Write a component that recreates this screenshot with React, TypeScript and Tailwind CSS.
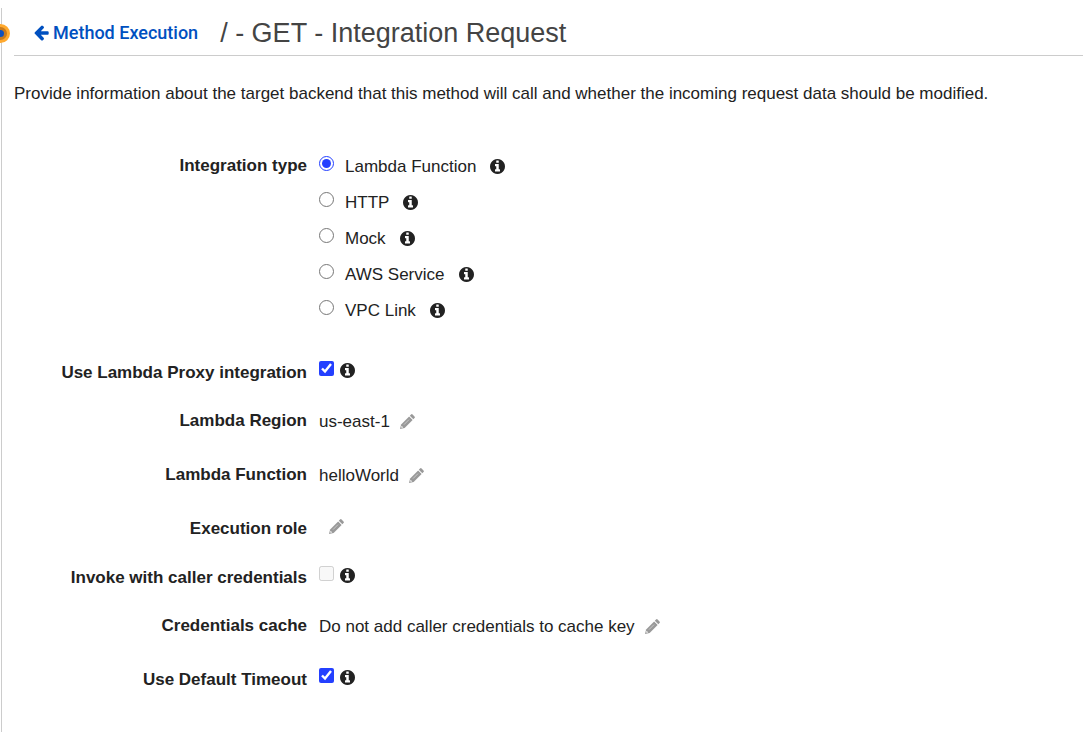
import { useState, type ReactNode } from 'react';

const INTEGRATION_TYPES = ['Lambda Function', 'HTTP', 'Mock', 'AWS Service', 'VPC Link'];

function InfoButton({ about }: { about: string }) {
  return (
    <button type="button" aria-label={`About ${about}`} className="cursor-pointer pb-px">
      <svg viewBox="128 128 1536 1536" className="size-[15px] fill-[#222]" aria-hidden="true">
        <path d="M1152 1376v-160q0-14-9-23t-23-9h-96v-512q0-14-9-23t-23-9h-320q-14 0-23 9t-9 23v160q0 14 9 23t23 9h96v320h-96q-14 0-23 9t-9 23v160q0 14 9 23t23 9h448q14 0 23-9t9-23zm-128-896v-160q0-14-9-23t-23-9h-192q-14 0-23 9t-9 23v160q0 14 9 23t23 9h192q14 0 23-9t9-23zm640 416q0 209-103 385.5t-279.5 279.5-385.5 103-385.5-103-279.5-279.5-103-385.5 103-385.5 279.5-279.5 385.5-103 385.5 103 279.5 279.5 103 385.5z" />
      </svg>
    </button>
  );
}

function EditButton({ field }: { field: string }) {
  return (
    <button type="button" aria-label={`Edit ${field}`} className="ml-[10px] cursor-pointer pb-px">
      <svg viewBox="0 0 15 15" className="size-[15px] fill-[#999]" aria-hidden="true">
        <path d="M9.800 1.700 11 .5q.8-.8 1.600 0l1.900 1.900q.8.8 0 1.600l-1.200 1.200z" />
        <path d="M9.100 2.400l3.500 3.500-8 8L0 15l1.100-4.600z" />
        <path d="M1.600 11.800l1.600 1.600-1.500.4-.5-.5z" className="fill-white" />
        <path d="M4 10.600l5-5" className="stroke-[#ddd] stroke-[0.7]" />
      </svg>
    </button>
  );
}

function RowLabel({ label, htmlFor }: { label: string; htmlFor?: string }) {
  return (
    <div className="w-[293px] shrink-0 text-right font-bold">
      {htmlFor ? <label htmlFor={htmlFor}>{label}</label> : label}
    </div>
  );
}

function ValueRow({ label, children }: { label: string; children: ReactNode }) {
  return (
    <div className="mb-[29px] flex gap-3">
      <RowLabel label={label} />
      <div className="mt-px flex items-center">
        {children}
        <EditButton field={label} />
      </div>
    </div>
  );
}

function CheckRow({ id, label, checked = false, disabled = false }: { id: string; label: string; checked?: boolean; disabled?: boolean }) {
  return (
    <div className="mb-6 flex gap-3">
      <RowLabel label={label} htmlFor={id} />
      <div className="flex items-center gap-[6px] pb-[5px]">
        <input id={id} type="checkbox" defaultChecked={checked} disabled={disabled} className="mb-1 size-[15px] accent-[#2440ff]" />
        <InfoButton about={label} />
      </div>
    </div>
  );
}

export default function App() {
  const [type, setType] = useState('Lambda Function');

  return (
    <div className="min-h-screen overflow-hidden bg-white pt-2 font-['Liberation_Sans',Arial,sans-serif] text-[17px] leading-6 text-[#222]">
      <div className="relative ml-px min-h-screen border-l border-[#ccc] pl-3">
        {/* Resize handle on the divider */}
        <span className="absolute top-4 -left-[11px] size-[19px] rounded-full border-3 border-[#ffa92e] bg-[#c87a1d] p-[3px]">
          <span className="block size-full rounded-full bg-[#0d50c0]" />
        </span>

        <header className="flex h-12 items-center border-b border-[#ccc] pt-[2px] pl-[19px]">
          <a href="#method-execution" className="flex items-center gap-1 font-['Roboto',sans-serif] text-lg font-medium text-[#0050c0]">
            <svg viewBox="64 128 1600 1664" className="size-4 fill-current" aria-hidden="true">
              <path d="M1664 896v128q0 53-32.5 90.5t-84.5 37.500h-704l293 294q38 36 38 90t-38 90l-75 76q-37 37-90 37-52 0-91-37l-651-652q-37-37-37-90 0-52 37-91l651-650q38-38 91-38 52 0 90 38l75 74q38 38 38 91t-38 91l-293 293h704q52 0 84.5 37.500t32.500 90.500z" />
            </svg>
            Method Execution
          </a>
          <h1 className="ml-[22px] text-[27px] leading-8 text-[#444]">/ - GET - Integration Request</h1>
        </header>

        <p className="mt-[26px]">
          Provide information about the target backend that this method will call and whether the incoming request data should be modified.
        </p>

        <form className="mt-12">
          <fieldset className="flex gap-3" aria-label="Integration type">
            <RowLabel label="Integration type" />
            <div className="mt-px flex flex-col gap-3">
              {INTEGRATION_TYPES.map((name) => (
                <div key={name} className="flex items-center gap-[14px]">
                  <label className="flex items-center gap-[11px]">
                    <input
                      type="radio"
                      name="integrationType"
                      checked={type === name}
                      onChange={() => setType(name)}
                      className="mb-[7px] size-[15px] accent-[#2440ff]"
                    />
                    {name}
                  </label>
                  <InfoButton about={name} />
                </div>
              ))}
            </div>
          </fieldset>

          <div className="mt-[38px]">
            <CheckRow id="lambda-proxy" label="Use Lambda Proxy integration" checked />
            <ValueRow label="Lambda Region">us-east-1</ValueRow>
            <ValueRow label="Lambda Function">helloWorld</ValueRow>
            <div className="mb-[25px] flex gap-3">
              <RowLabel label="Execution role" />
              <div className="flex items-center pb-1">
                <EditButton field="Execution role" />
              </div>
            </div>
            <CheckRow id="caller-credentials" label="Invoke with caller credentials" disabled />
            <ValueRow label="Credentials cache">Do not add caller credentials to cache key</ValueRow>
            <CheckRow id="default-timeout" label="Use Default Timeout" checked />
          </div>
        </form>
      </div>
    </div>
  );
}
